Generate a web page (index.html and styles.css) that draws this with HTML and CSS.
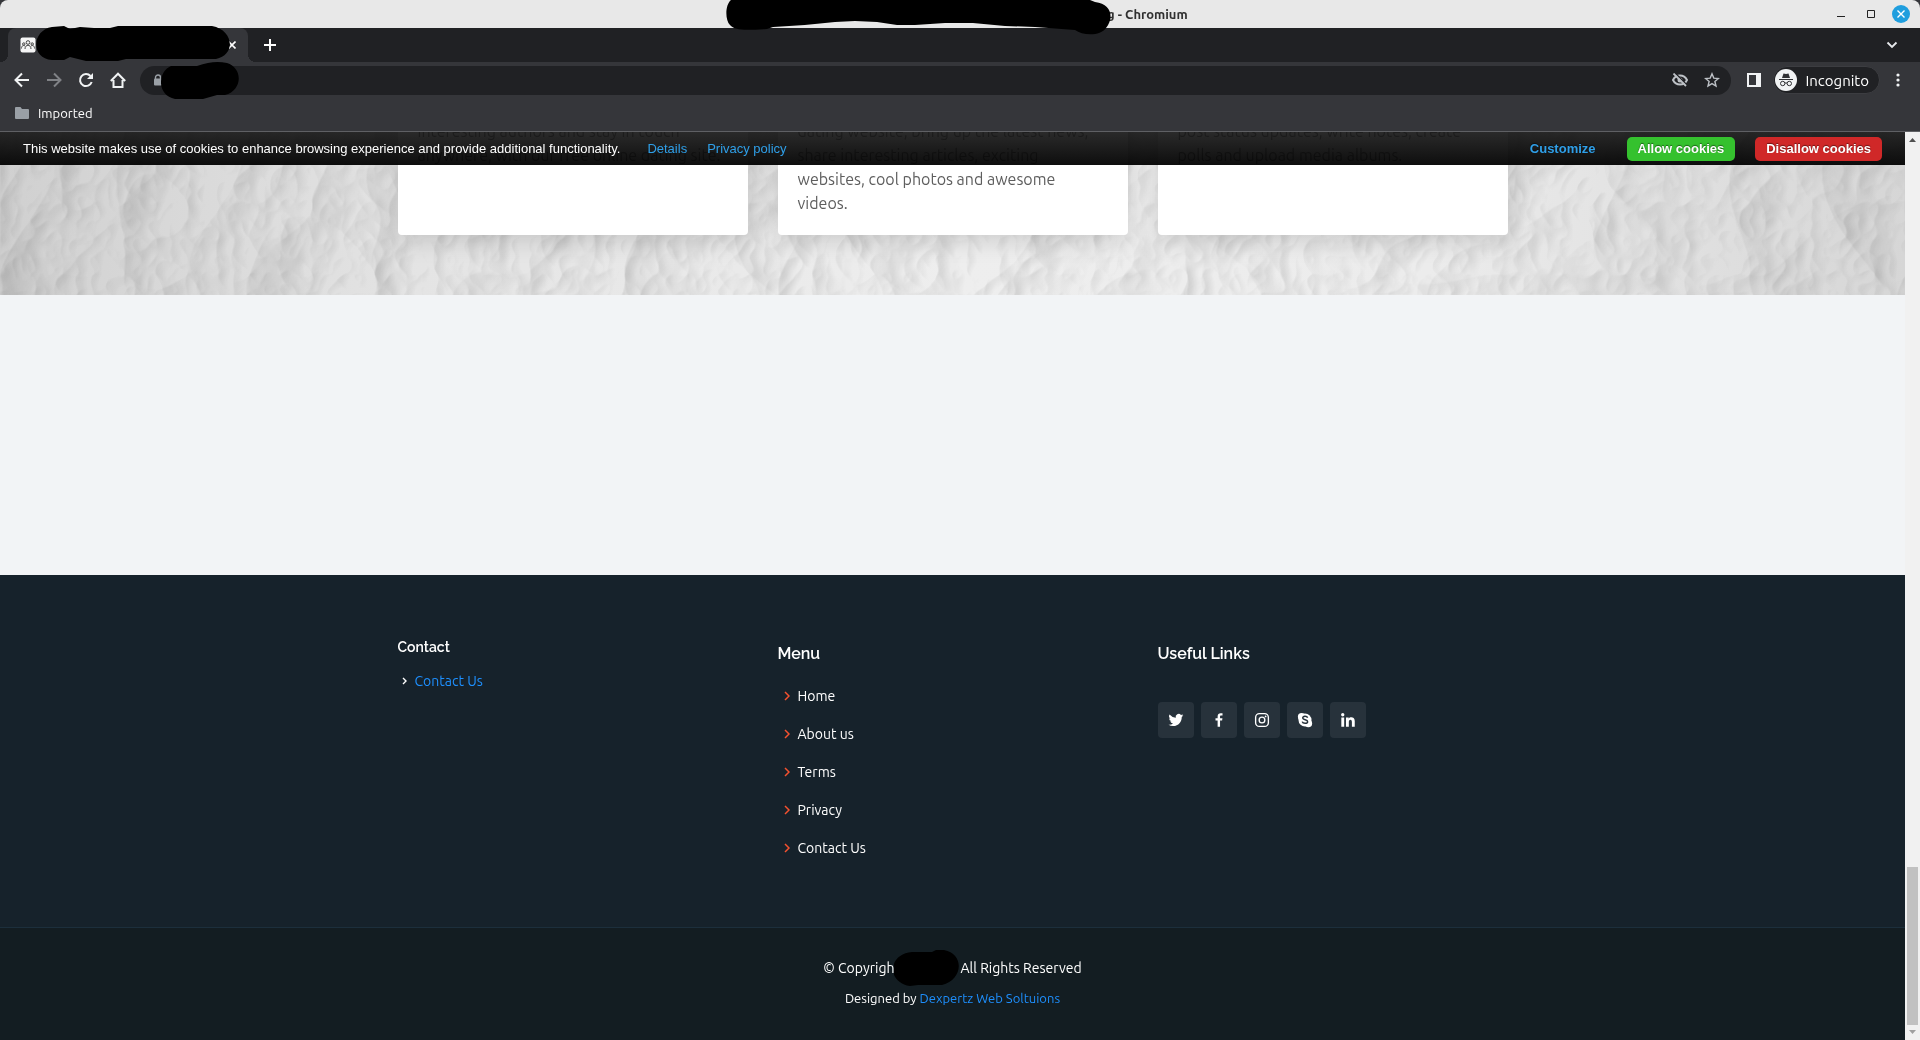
FILE: index.html
```
<!DOCTYPE html>
<html lang="en">
<head>
    <meta charset="UTF-8">
    <title>Chromium</title>
    <link rel="stylesheet" href="styles.css">
</head>
<body>
    <header class="titlebar">
        <span class="window-title">g - Chromium</span>
        <svg class="blot blot-title" width="390" height="36" viewBox="0 0 390 36"><path d="M6 0C0 5 0 20 5 25C10 31 22 30 42 29L48 27C70 26 90 24 110 22L130 21L152 22L172 25H190L220 23H248L280 26L310 27L350 30C358 36 376 36 381 28C389 18 387 4 370 2L365 0Z"/></svg>
        <div class="window-buttons">
            <button aria-label="Minimize"><svg width="18" height="18"><path d="M5 11.500h8" stroke="#222"/></svg></button>
            <button aria-label="Maximize"><svg width="18" height="18"><path d="M5.500 5.500h7v7h-7z" fill="none" stroke="#222"/></svg></button>
            <button aria-label="Close"><svg width="18" height="18"><circle cx="9" cy="9" r="9" fill="#1f9ede"/><path d="M5.500 5.500l7 7M12.500 5.500l-7 7" stroke="#fff" stroke-width="1.400"/></svg></button>
        </div>
    </header>
    <div class="tabstrip">
        <div class="tab">
            <svg width="16" height="16" viewBox="0 0 16 16"><rect x=".5" y=".5" width="15" height="15" rx="2" fill="#f5f5f5"/><g fill="none" stroke="#444"><circle cx="8" cy="5.500" r="1.800"/><circle cx="3.800" cy="7" r="1.200"/><circle cx="12.200" cy="7" r="1.200"/><path d="M5 12c0-5 6-5 6 0M1.500 11.500c0-3 2-3.500 3.500-2.500M14.500 11.500c0-3-2-3.500-3.500-2.500"/></g></svg>
            <button class="tab-close" aria-label="Close tab"><svg width="8" height="8"><path d="M.5 .5l7 7M7.500 .5l-7 7" stroke="#fff" stroke-width="1.600"/></svg></button>
            <svg class="blot blot-tab" width="196" height="36" viewBox="0 0 196 36"><path d="M16 1C-4 4-6 32 16 34L28 34L34 31L50 35H82L90 33H180C200 29 198 4 176 0H82L74 2H58L44 1L34 3L28 0Z"/></svg>
        </div>
        <button aria-label="New tab"><svg width="12" height="12"><path d="M6 0v12M0 6h12" stroke="#fff" stroke-width="2"/></svg></button>
        <button class="tab-search" aria-label="Search tabs"><svg width="12" height="8"><path d="M1.500 1.500L6 6l4.500-4.500" fill="none" stroke="#e8eaed" stroke-width="1.800"/></svg></button>
    </div>
    <nav class="toolbar">
        <button aria-label="Back"><svg width="16" height="16"><path d="M15 8H2M8 1.500L1.500 8L8 14.500" fill="none" stroke="#f1f3f4" stroke-width="2"/></svg></button>
        <button aria-label="Forward"><svg width="16" height="16"><path d="M1 8h13M8 1.500L14.500 8L8 14.500" fill="none" stroke="#808286" stroke-width="2"/></svg></button>
        <button aria-label="Reload"><svg width="16" height="16"><path d="M13.700 10A6 6 0 1 1 12.500 4" fill="none" stroke="#f1f3f4" stroke-width="2"/><path d="M15 1v6H9z" fill="#f1f3f4"/></svg></button>
        <button aria-label="Home"><svg width="16" height="16"><path d="M3.500 8v7h9V8M.800 9L8 1.700L15.200 9" fill="none" stroke="#f1f3f4" stroke-width="2"/></svg></button>
        <div class="address">
            <svg width="10" height="12"><path d="M2.500 5V3.500a2.500 2.500 0 0 1 5 0V5" fill="none" stroke="#9aa0a6" stroke-width="1.400"/><rect x="1" y="4.500" width="8" height="7" rx="1" fill="#9aa0a6"/></svg>
            <input type="text" aria-label="Address">
            <button aria-label="Cookies blocked"><svg width="16" height="14" viewBox="0 0 16 14"><path d="M1 7c3-6 11-6 14 0c-3 6-11 6-14 0z" fill="none" stroke="#bdc1c6" stroke-width="2"/><circle cx="8" cy="7" r="2.500" fill="#bdc1c6"/><path d="M3.500 .5L16 13" stroke="#202124" stroke-width="1.500"/><path d="M1.500 .5L14 13" stroke="#bdc1c6" stroke-width="1.800"/></svg></button>
            <button aria-label="Bookmark"><svg width="16" height="16" viewBox="0 0 16 16"><path d="M8 1.800l1.800 4.300 4.600.4-3.500 3 1.100 4.500L8 11.600 4 14l1.100-4.500-3.500-3 4.600-.4z" fill="none" stroke="#bdc1c6" stroke-width="1.400"/></svg></button>
            <svg class="blot blot-url" width="78" height="38" viewBox="0 0 78 38"><path d="M10 4C-4 10-4 34 14 37H42L56 33H64C82 28 82 6 66 1C56-1 48 0 36 4Z"/></svg>
        </div>
        <button aria-label="Side panel"><svg width="14" height="14"><path d="M1 1h12v12H1z" fill="none" stroke="#f1f3f4" stroke-width="2"/><path d="M9 1h4v12H9z" fill="#f1f3f4"/></svg></button>
        <button class="incognito">
            <svg width="22" height="22" viewBox="0 0 22 22"><circle cx="11" cy="11" r="11" fill="#f1f3f4"/><g fill="#303134"><path d="M8.500 4.500l2.500.500 2.500-.500 1.500 4.500h-8z"/><path d="M4 10h14v1H4z"/></g><g fill="none" stroke="#303134"><circle cx="7.700" cy="14.500" r="2.200"/><circle cx="14.300" cy="14.500" r="2.200"/><path d="M9.900 14h2.200"/></g></svg>
            Incognito
        </button>
        <button aria-label="Menu"><svg width="4" height="14" fill="#f1f3f4"><circle cx="2" cy="2" r="1.600"/><circle cx="2" cy="7" r="1.600"/><circle cx="2" cy="12" r="1.600"/></svg></button>
    </nav>
    <div class="bookmarks">
        <svg width="14" height="12"><path d="M1 0h4.500L7 2h6a1 1 0 0 1 1 1v8a1 1 0 0 1-1 1H1a1 1 0 0 1-1-1V1a1 1 0 0 1 1-1z" fill="#9aa0a6"/></svg>
        <a href="#">Imported</a>
    </div>

    <div class="viewport">
        <main class="page">
            <div class="cookie-bar">
                <span>This website makes use of cookies to enhance browsing experience and provide additional functionality.</span>
                <a href="#">Details</a>
                <a href="#">Privacy policy</a>
                <button class="customize">Customize</button>
                <button class="allow">Allow cookies</button>
                <button class="disallow">Disallow cookies</button>
            </div>
            <section class="features">
                <svg class="paper" aria-hidden="true">
                    <filter id="crumple" x="0" y="0" width="100%" height="100%" color-interpolation-filters="sRGB">
                        <feTurbulence type="turbulence" baseFrequency=".008 .007" numOctaves="4" seed="11"/>
                        <feColorMatrix values="0 0 0 0 0  0 0 0 0 0  0 0 0 0 0  0 0 0 -1 1"/>
                        <feDiffuseLighting surfaceScale="3" diffuseConstant="1.100" lighting-color="#fff"><feDistantLight azimuth="200" elevation="62"/></feDiffuseLighting>
                    </filter>
                    <rect width="100%" height="100%" filter="url(#crumple)"/>
                </svg>
                <div class="columns">
                    <p class="card">interesting authors and stay in touch anywhere, with our free online dating site.</p>
                    <p class="card">dating website, bring up the latest news, share interesting articles, exciting websites, cool photos and awesome videos.</p>
                    <p class="card">post status updates, write notes, create polls and upload media albums.</p>
                </div>
            </section>
            <section class="blank"></section>
            <footer class="footer">
                <div class="columns footer-top">
                    <div class="contact">
                        <h3>Contact</h3>
                        <p><svg width="5" height="8"><path d="M1 1l3 3-3 3" fill="none" stroke="#fff" stroke-width="1.400"/></svg><a href="#">Contact Us</a></p>
                    </div>
                    <div class="menu">
                        <h4>Menu</h4>
                        <ul>
                            <li><svg width="6" height="10"><path d="M1 1l4 4-4 4" fill="none" stroke="#f6512f" stroke-width="1.500"/></svg><a href="#">Home</a></li>
                            <li><svg width="6" height="10"><path d="M1 1l4 4-4 4" fill="none" stroke="#f6512f" stroke-width="1.500"/></svg><a href="#">About us</a></li>
                            <li><svg width="6" height="10"><path d="M1 1l4 4-4 4" fill="none" stroke="#f6512f" stroke-width="1.500"/></svg><a href="#">Terms</a></li>
                            <li><svg width="6" height="10"><path d="M1 1l4 4-4 4" fill="none" stroke="#f6512f" stroke-width="1.500"/></svg><a href="#">Privacy</a></li>
                            <li><svg width="6" height="10"><path d="M1 1l4 4-4 4" fill="none" stroke="#f6512f" stroke-width="1.500"/></svg><a href="#">Contact Us</a></li>
                        </ul>
                    </div>
                    <div class="links">
                        <h4>Useful Links</h4>
                        <div class="social">
                            <a href="#" aria-label="Twitter"><svg width="18" height="18" viewBox="0 0 24 24"><path d="M19.630 8v.520c0 5.330-4.060 11.480-11.480 11.480A11.400 11.400 0 0 1 2 18.200a8.100 8.100 0 0 0 6-1.700 4 4 0 0 1-3.800-2.800 4.300 4.300 0 0 0 1.800-.070A4 4 0 0 1 2.800 9.660v-.050c.5.300 1.200.5 1.800.5A4 4 0 0 1 3.400 4.700a11.500 11.500 0 0 0 8.300 4.220 4 4 0 0 1 6.900-3.700 8 8 0 0 0 2.560-1 4 4 0 0 1-1.770 2.230A8 8 0 0 0 21.700 5.800 8.700 8.700 0 0 1 19.630 8z"/></svg></a>
                            <a href="#" aria-label="Facebook"><svg width="18" height="18" viewBox="0 0 24 24"><path d="M13.400 21v-8.200h2.760l.410-3.200H13.400V7.550c0-.930.260-1.560 1.600-1.560h1.680V3.130a23 23 0 0 0-2.440-.120c-2.420 0-4.080 1.480-4.080 4.190v2.400H7.330v3.200h2.830V21z"/></svg></a>
                            <a href="#" aria-label="Instagram"><svg width="18" height="18" viewBox="0 0 24 24"><g fill="none" stroke="#fff" stroke-width="1.800"><rect x="3.500" y="3.500" width="17" height="17" rx="5"/><circle cx="12" cy="12" r="3.800"/></g><circle cx="16.800" cy="7.200" r="1.200"/></svg></a>
                            <a href="#" aria-label="Skype"><svg width="18" height="18" viewBox="0 0 24 24"><circle cx="7.500" cy="7.500" r="5"/><circle cx="16.500" cy="16.500" r="5"/><circle cx="12" cy="12" r="8.700"/><path d="M15.500 9c-1-3-7-2.500-6.500.5.500 2.800 6.500 1.500 6.500 4.700 0 3-6.500 3-7.200 0" fill="none" stroke="#27323b" stroke-width="2"/></svg></a>
                            <a href="#" aria-label="LinkedIn"><svg width="18" height="18" viewBox="0 0 24 24"><circle cx="5" cy="5" r="2.200"/><path d="M3.100 8.600h3.800V21H3.100zM9.300 8.600h3.600v1.700c1.500-3 8.100-2.800 8.100 3V21h-3.800v-6.500c0-4-4.100-3.500-4.100 0V21H9.300z"/></svg></a>
                        </div>
                    </div>
                </div>
                <div class="footer-bottom">
                    <div class="copyright">
                        <span>© Copyrigh</span>
                        <svg width="66" height="36" viewBox="0 0 66 36"><path d="M18 2C-6 4-8 32 16 36L24 35H48C69 30 71 4 50 0L42 0L38 2Z"/></svg>
                        <span>All Rights Reserved</span>
                    </div>
                    <div class="credits">Designed by <a href="#">Dexpertz Web Soltuions</a></div>
                </div>
            </footer>
        </main>
        <div class="scrollbar">
            <svg width="7" height="4"><path d="M0 4L3.500 0L7 4z" fill="#505050"/></svg>
            <div class="thumb"></div>
            <svg width="7" height="4"><path d="M0 0L3.500 4L7 0z" fill="#a0a0a0"/></svg>
        </div>
    </div>
</body>
</html>
```

FILE: styles.css
```
* { box-sizing: border-box; }
body { margin: 0; height: 100vh; display: flex; flex-direction: column; overflow: hidden; background: #35363a; color: #fff; font-family: Ubuntu, "Noto Sans", sans-serif; font-size: 14px; }
button { border: 0; padding: 0; background: none; color: inherit; font: inherit; display: flex; align-items: center; cursor: pointer; }
a { text-decoration: none; color: #1e90ff; }
svg { display: block; flex: none; }
h3, h4, p, ul { margin: 0; padding: 0; }
.blot { position: absolute; fill: #000; z-index: 5; }

/* window frame */
.titlebar { position: relative; height: 28px; display: flex; align-items: center; justify-content: flex-end; background: #e8e8e8; color: #303030; border-radius: 8px 8px 0 0; }
.window-title { position: absolute; left: 1107px; font-size: 13px; font-weight: bold; }
.blot-title { left: 725px; top: 0; }
.window-buttons { display: flex; gap: 12px; padding-right: 10px; }
.tabstrip { height: 34px; display: flex; align-items: center; background: #202124; padding: 0 22px 0 8px; }
.tab { position: relative; width: 240px; height: 34px; margin-right: 16px; padding: 0 12px; display: flex; align-items: center; justify-content: space-between; background: #35363a; border-radius: 8px 8px 0 0; }
.tab::before, .tab::after { content: ""; position: absolute; bottom: 0; width: 8px; height: 8px; }
.tab::before { left: -8px; background: radial-gradient(circle at 0 0, transparent 8px, #35363a 8px); }
.tab::after { right: -8px; background: radial-gradient(circle at 100% 0, transparent 8px, #35363a 8px); }
.blot-tab { left: 28px; top: -2px; }
.tab-search { margin-left: auto; }
.toolbar { height: 36px; display: flex; align-items: center; gap: 16px; padding: 0 20px 0 14px; }
.address { position: relative; flex: 1; height: 29px; margin-left: -2px; padding: 0 11px 0 13px; display: flex; align-items: center; gap: 16px; background: #202124; border-radius: 15px; }
.address input { flex: 1; border: 0; background: none; color: #fff; outline: 0; }
.blot-url { left: 21px; top: -4px; }
.incognito { height: 28px; margin-left: -4px; padding: 0 10px 0 1px; gap: 8px; background: #202124; border: 1px solid #3c3d41; border-radius: 14px; font-size: 15px; }
.bookmarks { height: 34px; display: flex; align-items: center; gap: 9px; padding: 0 15px 4px; border-bottom: 1px solid #5f6064; }
.bookmarks a { color: #fff; font-size: 13px; }

/* visible part of the site */
.viewport { flex: 1; min-height: 0; display: flex; }
.page { position: relative; flex: 1; display: flex; flex-direction: column; background: #f2f4f6; overflow: hidden; }
.cookie-bar { position: absolute; top: 0; left: 0; right: 0; z-index: 2; height: 33px; padding: 0 23px; display: flex; align-items: center; gap: 20px; background: linear-gradient(rgba(24,24,24,.92), rgba(4,4,4,.96)); font-family: "Liberation Sans", Arial, sans-serif; font-size: 13px; }
.cookie-bar a { color: #2f9fe8; }
.cookie-bar span { margin-right: 7px; }
.cookie-bar button { height: 24px; padding: 0 11px; border-radius: 5px; font-weight: bold; text-shadow: 0 -1px 1px rgba(0,0,0,.5); }
.cookie-bar .customize { margin-left: auto; color: #2f9fe8; }
.cookie-bar .allow { background: #35c12e; }
.cookie-bar .disallow { background: #d02828; }
.columns { display: grid; grid-template-columns: repeat(3, 1fr); gap: 30px; width: 1110px; max-width: 100%; margin: 0 auto; }
.features { position: relative; height: 163px; padding-bottom: 60px; display: flex; align-items: flex-end; overflow: hidden; background: linear-gradient(90deg, #d0d0d0, #e4e4e4 22%, #eee 50%, #ececec 75%, #d6d6d6); }
.paper { position: absolute; inset: 0; width: 100%; height: 100%; mix-blend-mode: multiply; }
.features .columns { position: relative; }
.card { padding: 20px; background: #fff; color: #5e5e5e; border-radius: 4px; box-shadow: 0 5px 25px rgba(0,0,0,.15); font-size: 16px; line-height: 24px; }
.blank { height: 280px; }

.footer { flex: 1; display: flex; flex-direction: column; background: #16222b; }
.footer-top { height: 352px; padding-top: 60px; }
.footer h3, .footer h4 { font-family: Raleway, Lato, sans-serif; font-weight: 600; line-height: 20px; }
.footer h3 { font-size: 14px; padding-top: 2px; }
.footer h4 { font-size: 16px; padding-top: 9px; }
.contact p { display: flex; align-items: center; gap: 8px; margin-top: 14px; padding-left: 4px; line-height: 20px; }
.menu ul { list-style: none; margin-top: 13px; }
.menu li { display: flex; align-items: center; gap: 8px; height: 38px; padding-left: 6px; }
.menu a { color: #fff; }
.social { display: flex; gap: 7px; margin-top: 38px; }
.social a { width: 36px; height: 36px; display: flex; align-items: center; justify-content: center; background: #27323b; border-radius: 4px; }
.social svg { fill: #fff; }
.footer-bottom { flex: 1; padding-top: 22px; background: #131d22; border-top: 1px solid #1c2f3c; display: flex; flex-direction: column; align-items: center; }
.copyright { display: flex; align-items: center; height: 36px; }
.credits { font-size: 13px; line-height: 20px; margin-top: 2px; }
.scrollbar { width: 15px; padding: 6px 0; display: flex; flex-direction: column; align-items: center; background: #f1f1f1; }
.thumb { width: 11px; height: 158px; margin: auto 0 5px; background: #c1c1c1; }
```
